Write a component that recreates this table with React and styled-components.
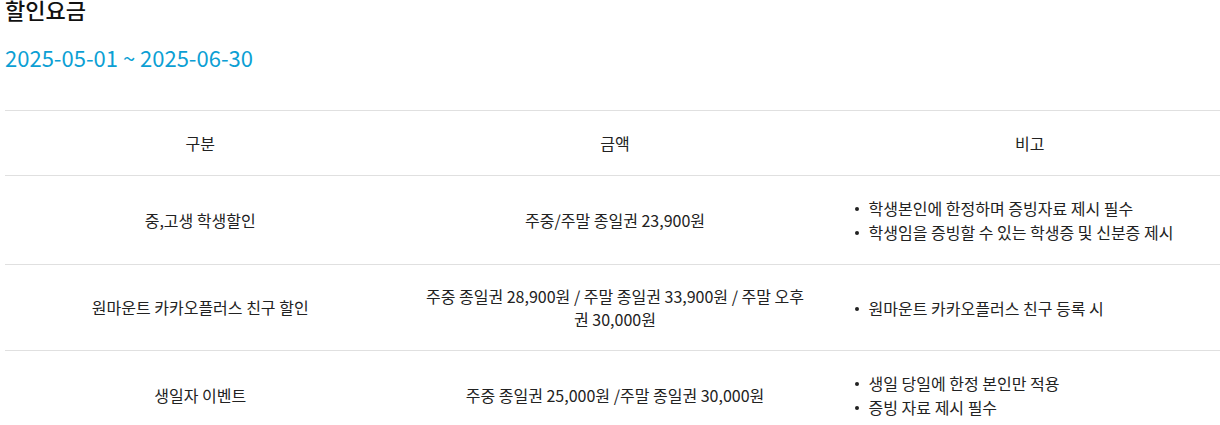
import React from "react";
import styled, { createGlobalStyle } from "styled-components";

const Global = createGlobalStyle`
  html, body { margin: 0; padding: 0; background: #fff; overflow: hidden; }
  body { font-family: "Noto Sans CJK KR", "Noto Sans", sans-serif; color: #222; }
`;

const Page = styled.div`
  padding-left: 5px;
  width: 1220px;
`;

const Title = styled.h3`
  margin: -3px 0 0;
  font-size: 22px;
  line-height: 24px;
  font-weight: 500;
  color: #111;
`;

const Period = styled.p`
  margin: 21px 0 0;
  font-size: 22px;
  line-height: 30px;
  color: #0c9fd4;
`;

const Table = styled.table`
  margin-top: 38px;
  width: 1220px;
  border-collapse: collapse;
  table-layout: fixed;
  font-size: 16px;
  color: #222;
`;

const Th = styled.th`
  padding: 20px;
  line-height: 24px;
  font-weight: 400;
  text-align: center;
  border-top: 1px solid #e0e0e0;
`;

const Td = styled.td`
  padding: ${(p) => (p.$wide ? "20px 26px" : "20px")};
  line-height: 22.5px;
  text-align: ${(p) => (p.$left ? "left" : "center")};
  vertical-align: middle;
  border-top: 1px solid #e0e0e0;
`;

const List = styled.ul`
  margin: 0;
  padding: 0;
  list-style: none;
`;

const Item = styled.li`
  line-height: 24px;
  &::before {
    content: "";
    display: inline-block;
    width: 4px;
    height: 4px;
    border-radius: 50%;
    background: #222;
    margin-right: 10px;
    vertical-align: 4px;
  }
`;

const rows = [
  {
    name: "중,고생 학생할인",
    price: "주중/주말 종일권 23,900원",
    notes: ["학생본인에 한정하며 증빙자료 제시 필수", "학생임을 증빙할 수 있는 학생증 및 신분증 제시"],
  },
  {
    name: "원마운트 카카오플러스 친구 할인",
    price: "주중 종일권 28,900원 / 주말 종일권 33,900원 / 주말 오후권 30,000원",
    notes: ["원마운트 카카오플러스 친구 등록 시"],
  },
  {
    name: "생일자 이벤트",
    price: "주중 종일권 25,000원 /주말 종일권 30,000원",
    notes: ["생일 당일에 한정 본인만 적용", "증빙 자료 제시 필수"],
  },
];

export default function App() {
  return (
    <>
      <Global />
      <Page>
        <Title>할인요금</Title>
        <Period>2025-05-01 ~ 2025-06-30</Period>
        <Table>
          <colgroup>
            <col style={{ width: "32%" }} />
            <col style={{ width: "36%" }} />
            <col style={{ width: "32%" }} />
          </colgroup>
          <thead>
            <tr>
              <Th>구분</Th>
              <Th>금액</Th>
              <Th>비고</Th>
            </tr>
          </thead>
          <tbody>
            {rows.map((r) => (
              <tr key={r.name}>
                <Td>{r.name}</Td>
                <Td $wide>{r.price}</Td>
                <Td $left>
                  <List>
                    {r.notes.map((n) => (
                      <Item key={n}>{n}</Item>
                    ))}
                  </List>
                </Td>
              </tr>
            ))}
          </tbody>
        </Table>
      </Page>
    </>
  );
}
